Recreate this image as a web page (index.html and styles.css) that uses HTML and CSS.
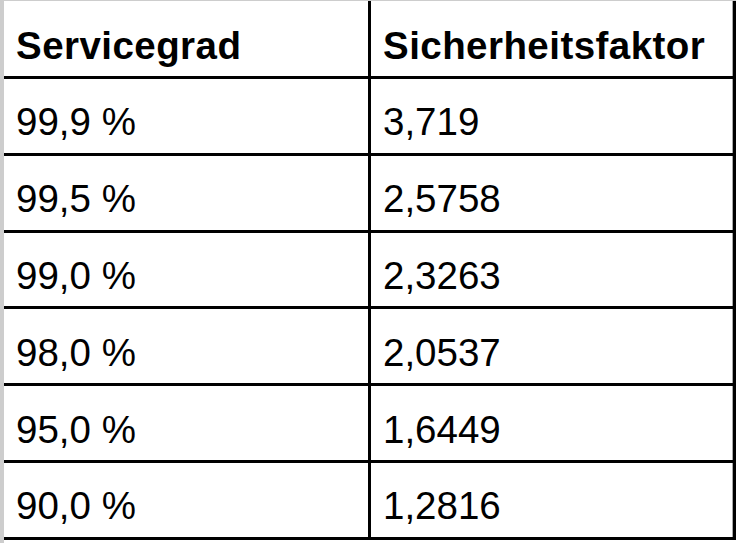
FILE: index.html
```html
<!DOCTYPE html>
<html lang="de">
<head>
<meta charset="utf-8">
<title>Servicegrad und Sicherheitsfaktor</title>
<link rel="stylesheet" href="styles.css">
</head>
<body>
<div class="frame">
  <div class="sheet">
    <div class="cell head">Servicegrad</div>
    <div class="cell head last">Sicherheitsfaktor</div>
    <div class="cell">99,9 %</div>
    <div class="cell last">3,719</div>
    <div class="cell">99,5 %</div>
    <div class="cell last">2,5758</div>
    <div class="cell">99,0 %</div>
    <div class="cell last">2,3263</div>
    <div class="cell">98,0 %</div>
    <div class="cell last">2,0537</div>
    <div class="cell">95,0 %</div>
    <div class="cell last">1,6449</div>
    <div class="cell">90,0 %</div>
    <div class="cell last">1,2816</div>
  </div>
</div>
</body>
</html>
```

FILE: styles.css
```css
html, body {
  margin: 0;
  padding: 0;
  background: #ffffff;
}

.frame {
  box-sizing: border-box;
  height: 543px;
  border-top: 1px solid #cdcdcd;
  border-left: 4px solid #cdcdcd;
  background: #ffffff;
}

.sheet {
  display: grid;
  grid-template-columns: 367px 365px;
  grid-template-rows: 78px repeat(6, 76.83px);
  font-family: "Liberation Sans", Arial, sans-serif;
  font-size: 38.5px;
  line-height: 1;
  color: #000000;
}

.cell {
  box-sizing: border-box;
  display: flex;
  align-items: flex-end;
  padding: 0 0 11px 12px;
  border-right: 3px solid #000000;
  border-bottom: 3px solid #000000;
  white-space: nowrap;
}

.cell.last {
  box-shadow: inset -1px 0 0 #a8a8a8;
}

.head {
  font-weight: bold;
  letter-spacing: 0.45px;
}
```
